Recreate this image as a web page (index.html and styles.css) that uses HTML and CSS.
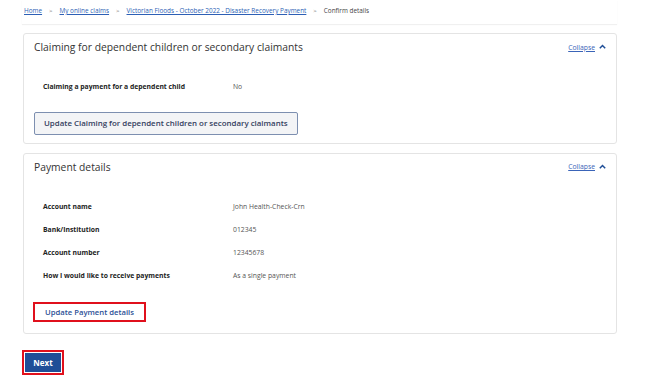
FILE: index.html
```html
<!DOCTYPE html>
<html lang="en">
<head>
  <meta charset="UTF-8" />
  <meta name="viewport" content="width=device-width, initial-scale=1.0" />
  <title>Confirm details</title>
  <link rel="stylesheet" href="styles.css">
</head>
<body>
  <div class="page">
    <nav class="breadcrumb">
      <a href="#">Home</a>
      <span class="sep">&gt;</span>
      <a href="#">My online claims</a>
      <span class="sep">&gt;</span>
      <a href="#">Victorian Floods - October 2022 - Disaster Recovery Payment</a>
      <span class="sep">&gt;</span>
      <span class="current">Confirm details</span>
    </nav>

    <section class="card">
      <div class="card-header">
        <h2>Claiming for dependent children or secondary claimants</h2>
        <a href="#" class="collapse">Collapse
          <svg width="7" height="5" viewBox="0 0 7 5"><path d="M0.8 4.2 L3.5 1.5 L6.2 4.2" fill="none" stroke="#1f4e97" stroke-width="1.5"/></svg>
        </a>
      </div>
      <div class="rows">
        <div class="row"><span class="label">Claiming a payment for a dependent child</span><span class="value">No</span></div>
      </div>
      <button class="btn-update">Update Claiming for dependent children or secondary claimants</button>
    </section>

    <section class="card">
      <div class="card-header">
        <h2>Payment details</h2>
        <a href="#" class="collapse">Collapse
          <svg width="7" height="5" viewBox="0 0 7 5"><path d="M0.8 4.2 L3.5 1.5 L6.2 4.2" fill="none" stroke="#1f4e97" stroke-width="1.5"/></svg>
        </a>
      </div>
      <div class="rows">
        <div class="row"><span class="label">Account name</span><span class="value">John Health-Check-Crn</span></div>
        <div class="row"><span class="label">Bank/Institution</span><span class="value">012345</span></div>
        <div class="row"><span class="label">Account number</span><span class="value">12345678</span></div>
        <div class="row"><span class="label">How I would like to receive payments</span><span class="value">As a single payment</span></div>
      </div>
      <button class="btn-link highlight">Update Payment details</button>
    </section>

    <div class="actions">
      <span class="highlight next-wrap"><button class="btn-next">Next</button></span>
    </div>
  </div>
</body>
</html>
```

FILE: styles.css
```css
body {
  margin: 0;
  font-family: "Open Sans", Arial, sans-serif;
  background: #fff;
  color: #222;
}
.page {
  width: 595px;
  margin-left: 22px;
}
.breadcrumb {
  height: 24px;
  display: flex;
  align-items: center;
  padding: 0 0 3px 2px;
  box-sizing: border-box;
  font-size: 6.4px;
  box-shadow: 0 1px 1px rgba(0, 0, 0, 0.06);
}
.breadcrumb a {
  color: #2d5fb5;
  text-decoration: underline;
}
.breadcrumb .sep {
  color: #666;
  margin: 0 7px;
  font-size: 6px;
}
.breadcrumb .current {
  color: #444;
}
.card {
  margin: 9px 0 0 1px;
  border: 1px solid #e4e4e4;
  border-radius: 3px;
  padding: 6px 10px 8px;
}
.card + .card {
  padding-bottom: 11px;
}
.card-header {
  display: flex;
  justify-content: space-between;
  align-items: center;
  height: 14px;
}
.card-header h2 {
  margin: 0;
  font-size: 10.3px;
  font-weight: normal;
  color: #333;
}
.collapse {
  color: #3a64b8;
  font-size: 6.8px;
  text-decoration: underline;
  display: flex;
  align-items: center;
  gap: 4px;
}
.collapse svg {
  margin-bottom: 1px;
}
.rows {
  margin: 21px 0 0 9px;
}
.row {
  display: flex;
  height: 22.9px;
  align-items: center;
  font-size: 6.8px;
}
.label {
  width: 190px;
  font-weight: bold;
  color: #222;
}
.value {
  color: #555;
}
.btn-update {
  display: block;
  margin-top: 14px;
  height: 23px;
  padding: 0 9px;
  font-family: inherit;
  font-size: 7.9px;
  font-weight: 600;
  color: #34405e;
  background: #f3f4f6;
  border: 1px solid #7d8fb0;
  border-radius: 2px;
}
.highlight {
  border: 2px solid #e0101c;
}
.btn-link {
  display: block;
  margin: 16px 0 0 -1px;
  height: 20px;
  padding: 0 10px;
  font-family: inherit;
  font-size: 7.7px;
  font-weight: 600;
  color: #2c4f96;
  background: #fff;
}
.actions {
  margin-top: 15px;
}
.next-wrap {
  display: inline-block;
  padding: 1px;
}
.btn-next {
  display: block;
  width: 36px;
  height: 19px;
  border: none;
  background: #1f4e97;
  color: #fff;
  font-family: inherit;
  font-size: 8px;
  font-weight: bold;
  padding: 0;
}
```
